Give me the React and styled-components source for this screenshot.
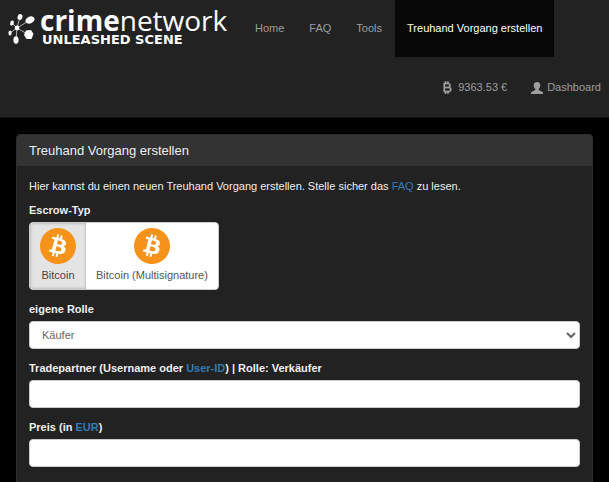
import React, { useState } from 'react';
import styled, { createGlobalStyle } from 'styled-components';
import { SiBitcoin } from 'react-icons/si';
import { FaBitcoinSign } from 'react-icons/fa6';

const escrowTypes = [
  { id: 'bitcoin', text: 'Bitcoin' },
  { id: 'multisig', text: 'Bitcoin (Multisignature)' },
];

const LogoMark = () => (
  <svg width="28" height="38" viewBox="0 0 28 38" aria-hidden="true">
    <g stroke="#b0b0b0" strokeWidth="1">
      <path d="M9 20L12 9M9 20L22 12M9 20L4 15M9 20L2 25M9 20L8 32M9 20L21 27" />
    </g>
    <g fill="#fff">
      <circle cx="9" cy="20" r="2.4" />
      <ellipse cx="12" cy="9" rx="2.4" ry="3" transform="rotate(20 12 9)" />
      <ellipse cx="22" cy="12" rx="4.8" ry="3.4" transform="rotate(-25 22 12)" />
      <ellipse cx="4" cy="15" rx="1.8" ry="2.6" transform="rotate(15 4 15)" />
      <ellipse cx="2" cy="25" rx="1.6" ry="2.6" />
      <ellipse cx="8" cy="32" rx="2.6" ry="3.8" />
      <path d="M18 22.5L23 22L25.5 26L23.5 31H18.5L16 27Z" />
    </g>
  </svg>
);

const UserIcon = () => (
  <svg width="12" height="12" viewBox="0 0 12 12" fill="currentColor" aria-hidden="true">
    <path d="M6 0C8.200 0 9.300 1.300 9.300 3.200C9.300 4.800 8.700 6 7.700 6.800C7.600 7.800 7.900 8.200 9 8.700L11.300 9.700C11.800 10 12 10.400 12 11V12H0V11C0 10.400 .2 10 .7 9.700L3 8.700C4.100 8.200 4.400 7.800 4.300 6.800C3.300 6 2.700 4.800 2.700 3.200C2.700 1.300 3.800 0 6 0Z" />
  </svg>
);

const App = () => {
  const [escrow, setEscrow] = useState('bitcoin');

  return (
    <>
      <GlobalStyle />
      <Navbar>
        <NavMain>
          <Brand href="#">
            <LogoMark />
            <BrandText>
              <BrandName>
                <b>crime</b>network
              </BrandName>
              <Tagline>UNLEASHED SCENE</Tagline>
            </BrandText>
          </Brand>
          <NavLink href="#">Home</NavLink>
          <NavLink href="#">FAQ</NavLink>
          <NavLink href="#">Tools</NavLink>
          <NavLink href="#" $active aria-current="page">
            Treuhand Vorgang erstellen
          </NavLink>
        </NavMain>
        <NavUser>
          <NavLink href="#">
            <FaBitcoinSign size={13} stroke="currentColor" strokeWidth={8} />
            9363.53 €
          </NavLink>
          <NavLink href="#">
            <UserIcon />
            Dashboard
          </NavLink>
        </NavUser>
      </Navbar>
      <Main>
        <Panel>
          <PanelTitle>Treuhand Vorgang erstellen</PanelTitle>
          <Form>
            <Intro>
              Hier kannst du einen neuen Treuhand Vorgang erstellen. Stelle sicher
              das <Link href="#">FAQ</Link> zu lesen.
            </Intro>
            <Fieldset>
              <Legend>Escrow-Typ</Legend>
              <ButtonGroup>
                {escrowTypes.map(({ id, text }) => (
                  <Choice key={id}>
                    <input
                      type="radio"
                      name="escrow"
                      value={id}
                      checked={escrow === id}
                      onChange={() => setEscrow(id)}
                    />
                    <Coin>
                      <SiBitcoin size={36} />
                    </Coin>
                    {text}
                  </Choice>
                ))}
              </ButtonGroup>
            </Fieldset>
            <Field>
              <Label htmlFor="role">eigene Rolle</Label>
              <Select id="role" defaultValue="buyer">
                <option value="buyer">Käufer</option>
                <option value="seller">Verkäufer</option>
              </Select>
            </Field>
            <Field>
              <Label htmlFor="partner">
                Tradepartner (Username oder <Link href="#">User-ID</Link>) | Rolle:
                Verkäufer
              </Label>
              <Input id="partner" type="text" />
            </Field>
            <Field>
              <Label htmlFor="price">
                Preis (in <Link href="#">EUR</Link>)
              </Label>
              <Input id="price" type="text" />
            </Field>
          </Form>
        </Panel>
      </Main>
    </>
  );
};

const GlobalStyle = createGlobalStyle`
  * {
    box-sizing: border-box;
  }
  body {
    margin: 0;
    background: #000;
    color: #eee;
    font-family: 'Liberation Sans', Arial, sans-serif;
    font-size: 11px;
    line-height: 17px;
  }
`;

const Navbar = styled.nav`
  background: #222;
  border-bottom: 1px solid #101010;
`;

const NavMain = styled.div`
  display: flex;
  flex-wrap: wrap;
  column-gap: 1px;
`;

const NavUser = styled.div`
  display: flex;
  justify-content: flex-end;
  padding: 2px 0 1px;
  margin-right: -4px;
`;

const Brand = styled.a`
  display: flex;
  gap: 4px;
  width: 242px;
  padding: 8px 0 0 8px;
  color: #fff;
  text-decoration: none;
`;

const BrandText = styled.span`
  display: flex;
  flex-direction: column;
`;

const BrandName = styled.span`
  font-family: 'Open Sans', 'Noto Sans', sans-serif;
  font-size: 28px;
  line-height: 24px;
  b {
    font-weight: 700;
  }
`;

const Tagline = styled.span`
  padding-left: 2px;
  font-family: 'DejaVu Sans', sans-serif;
  font-size: 13px;
  font-weight: 700;
  line-height: 16px;
`;

const NavLink = styled.a`
  display: flex;
  align-items: center;
  gap: 4px;
  height: 57px;
  padding: 0 12px;
  color: ${({ $active }) => ($active ? '#fff' : '#9d9d9d')};
  background: ${({ $active }) => ($active ? '#080808' : 'transparent')};
  text-decoration: none;
`;

const Main = styled.main`
  padding: 16px;
`;

const Panel = styled.section`
  background: #222;
  border: 1px solid #2d2d2d;
  border-radius: 4px;
  overflow: hidden;
`;

const PanelTitle = styled.h1`
  margin: 0;
  padding: 6px 12px;
  background: #333;
  font-size: 13px;
  font-weight: 400;
  line-height: 19px;
`;

const Form = styled.form`
  padding: 12px;
`;

const Intro = styled.p`
  margin: 0 0 7px;
`;

const Link = styled.a`
  color: #337ab7;
  text-decoration: none;
`;

const Field = styled.div`
  margin-bottom: 11px;
`;

const Fieldset = styled.fieldset`
  margin: 0 0 11px;
  padding: 0;
  border: 0;
`;

const Label = styled.label`
  display: block;
  margin-bottom: 3px;
  font-weight: 700;
`;

const Legend = styled.legend`
  margin-bottom: 3px;
  padding: 0;
  font-weight: 700;
`;

const ButtonGroup = styled.div`
  display: inline-flex;
  vertical-align: top;
  overflow: hidden;
  background: #fff;
  border: 1px solid #ccc;
  border-radius: 4px;
`;

const Choice = styled.label`
  display: flex;
  flex-direction: column;
  align-items: center;
  gap: 3px;
  padding: 5px 10px;
  color: #555;
  cursor: pointer;
  &:has(:checked) {
    background: #e4e4e4;
    color: #444;
    box-shadow: inset 0 0 3px #999;
  }
  input {
    position: absolute;
    opacity: 0;
  }
`;

const Coin = styled.span`
  display: flex;
  border-radius: 50%;
  background: radial-gradient(#fff 60%, transparent 62%);
  color: #f7931a;
`;

const Input = styled.input`
  display: block;
  width: 100%;
  height: 28px;
  padding: 4px 12px;
  border: 1px solid #ccc;
  border-radius: 4px;
  background: #fff;
  color: #666;
  font: inherit;
`;

const Select = styled.select`
  display: block;
  width: 100%;
  height: 28px;
  padding: 4px 0 4px 8px;
  border: 1px solid #ccc;
  border-radius: 4px;
  background: #fff;
  color: #666;
  font: inherit;
`;

export default App;
